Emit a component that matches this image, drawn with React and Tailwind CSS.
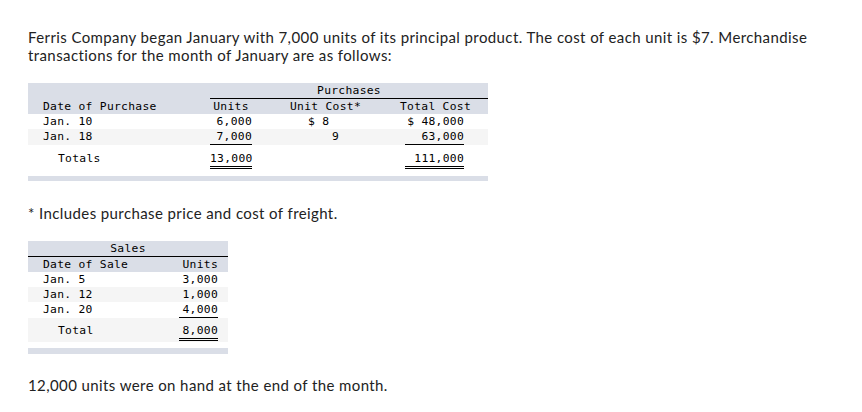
import React from 'react';

const purchases = [
  { date: 'Jan. 10', units: '6,000', cost: '$ 8', costPad: 'pl-[56px]', total: '$ 48,000', bg: 'bg-white', last: false },
  { date: 'Jan. 18', units: '7,000', cost: '9', costPad: 'pl-[80px]', total: '63,000', bg: 'bg-[#f5f5f5]', last: true },
];

const sales = [
  { date: 'Jan. 5', units: '3,000', bg: 'bg-white', last: false },
  { date: 'Jan. 12', units: '1,000', bg: 'bg-[#f5f5f5]', last: false },
  { date: 'Jan. 20', units: '4,000', bg: 'bg-white', last: true },
];

const mono = "font-['DejaVu_Sans_Mono',monospace] text-[11.3px] tracking-[0.3px] leading-[15px] text-black";

const PurchasesTable = () => (
  <div className={`w-[460px] ${mono}`}>
    <div className="bg-[#dadee7]">
      <div className="flex">
        <div className="w-[182px]" />
        <div className="w-[278px] border-b border-black text-center">Purchases</div>
      </div>
      <div className="flex">
        <div className="w-[182px] pl-[15px]">Date of Purchase</div>
        <div className="w-[42px] text-center">Units</div>
        <div className="w-[148px] pl-[38px]">Unit Cost*</div>
        <div className="flex-1">Total Cost</div>
      </div>
    </div>
    {purchases.map((r) => (
      <div key={r.date} className={`flex ${r.bg}`}>
        <div className="w-[182px] pl-[15px]">{r.date}</div>
        <div className={`w-[42px] text-right ${r.last ? 'border-b border-black' : ''}`}>{r.units}</div>
        <div className={`w-[148px] ${r.costPad}`}>{r.cost}</div>
        <div className="w-[64px] pl-[5px]">
          <div className={`text-right ${r.last ? 'border-b border-black' : ''}`}>{r.total}</div>
        </div>
      </div>
    ))}
    <div className="flex h-[29px] pt-[6px] bg-white">
      <div className="w-[182px] pl-[30px]">Totals</div>
      <div className="w-[42px]">
        <div className="text-right border-b-[3px] border-double border-black">13,000</div>
      </div>
      <div className="w-[148px]" />
      <div className="w-[64px] pl-[5px]">
        <div className="text-right border-b-[3px] border-double border-black">111,000</div>
      </div>
    </div>
    <div className="h-[2px]" />
    <div className="h-[5px] bg-[#dadee7]" />
  </div>
);

const SalesTable = () => (
  <div className={`w-[200px] ${mono}`}>
    <div className="bg-[#dadee7]">
      <div className="border-b border-black text-center">Sales</div>
      <div className="flex">
        <div className="w-[150px] pl-[15px]">Date of Sale</div>
        <div className="w-[40px] text-right">Units</div>
      </div>
    </div>
    {sales.map((r) => (
      <div key={r.date} className={`flex ${r.bg}`}>
        <div className="w-[151px] pl-[15px]">{r.date}</div>
        <div className={`w-[39px] text-right ${r.last ? 'border-b border-black' : ''}`}>{r.units}</div>
      </div>
    ))}
    <div className="flex h-[24px] pt-[5px] bg-[#f5f5f5]">
      <div className="w-[151px] pl-[30px]">Total</div>
      <div className="w-[39px]">
        <div className="text-right border-b-[3px] border-double border-black">8,000</div>
      </div>
    </div>
    <div className="h-[6px]" />
    <div className="h-[6px] bg-[#dadee7]" />
  </div>
);

export default function App() {
  return (
    <div className="w-[862px] h-[412px] bg-white pl-[28px] pt-[28px] font-['Lato',sans-serif] text-[15px] tracking-[0.4px] leading-[18px] text-[#222]">
      <p className="w-[815px]">
        Ferris Company began January with 7,000 units of its principal product. The cost of each unit is $7. Merchandise transactions for the month of January are as follows:
      </p>
      <div className="mt-[19px]">
        <PurchasesTable />
      </div>
      <p className="mt-[23px]">* Includes purchase price and cost of freight.</p>
      <div className="mt-[19px]">
        <SalesTable />
      </div>
      <p className="mt-[22px]">12,000 units were on hand at the end of the month.</p>
    </div>
  );
}
